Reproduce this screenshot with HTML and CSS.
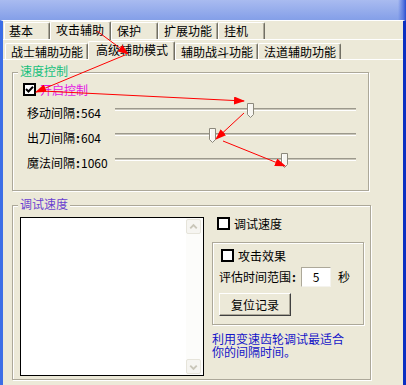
FILE: index.html
```html
<!DOCTYPE html>
<html lang="zh-CN">
<head>
<meta charset="utf-8">
<title>高级辅助模式</title>
<link rel="stylesheet" href="styles.css">
</head>
<body>
<div class="window">
  <div class="titlebar"></div>
  <div class="frame">
    <div class="tabrow outer">
      <div class="tab first">基本</div>
      <div class="tab sel">攻击辅助</div>
      <div class="tab">保护</div>
      <div class="tab">扩展功能</div>
      <div class="tab">挂机</div>
    </div>
    <div class="panel">
      <div class="tabrow inner">
        <div class="tab">战士辅助功能</div>
        <div class="tab sel">高级辅助模式</div>
        <div class="tab">辅助战斗功能</div>
        <div class="tab">法道辅助功能</div>
      </div>
      <div class="panel content">
        <fieldset class="group speed">
          <legend class="legend green">速度控制</legend>
          <label class="check enable">
            <span class="cb"><svg width="9" height="9" viewBox="0 0 9 9"><polyline points="1,4 3.5,6.5 8,1.8" fill="none" stroke="#000" stroke-width="2"/></svg></span>
            <span class="magenta">开启控制</span>
          </label>
          <div class="slider-row">
            <span class="slabel">移动间隔<span class="colon">:</span>564</span>
            <div class="track"><span class="thumb" style="left:132px"><svg width="8" height="15" viewBox="0 0 8 15"><path d="M0.5,0.5 H6.5 V11.5 L3.5,14.5 L0.5,11.5 Z" fill="#f7f6f1" stroke="#8c897c"/><path d="M1.5,1.5 V11" stroke="#fff"/></svg></span></div>
          </div>
          <div class="slider-row">
            <span class="slabel">出刀间隔<span class="colon">:</span>604</span>
            <div class="track"><span class="thumb" style="left:94px"><svg width="8" height="15" viewBox="0 0 8 15"><path d="M0.5,0.5 H6.5 V11.5 L3.5,14.5 L0.5,11.5 Z" fill="#f7f6f1" stroke="#8c897c"/><path d="M1.5,1.5 V11" stroke="#fff"/></svg></span></div>
          </div>
          <div class="slider-row">
            <span class="slabel">魔法间隔<span class="colon">:</span>1060</span>
            <div class="track"><span class="thumb" style="left:166px"><svg width="8" height="15" viewBox="0 0 8 15"><path d="M0.5,0.5 H6.5 V11.5 L3.5,14.5 L0.5,11.5 Z" fill="#f7f6f1" stroke="#8c897c"/><path d="M1.5,1.5 V11" stroke="#fff"/></svg></span></div>
          </div>
        </fieldset>
        <fieldset class="group debug">
          <legend class="legend purple">调试速度</legend>
          <div class="debug-body">
            <div class="log">
              <div class="log-text"></div>
              <div class="scrollbar">
                <span class="sbtn"><svg width="14" height="14" viewBox="0 0 14 14"><polyline points="3.5,8.5 7,5 10.5,8.5" fill="none" stroke="#c9c6b9" stroke-width="2"/></svg></span>
                <span class="strack"></span>
                <span class="sbtn"><svg width="14" height="14" viewBox="0 0 14 14"><polyline points="3.5,5.5 7,9 10.5,5.5" fill="none" stroke="#c9c6b9" stroke-width="2"/></svg></span>
              </div>
            </div>
            <div class="side">
              <label class="check top"><span class="cb"></span><span>调试速度</span></label>
              <div class="box">
                <label class="check inbox"><span class="cb"></span><span>攻击效果</span></label>
                <div class="eval">
                  <span>评估时间范围<span class="colon">:</span></span>
                  <span class="input">5</span>
                  <span class="sec">秒</span>
                </div>
                <button class="btn" type="button">复位记录</button>
              </div>
              <div class="hint">
                <div class="hint-line">利用变速齿轮调试最适合</div>
                <div class="hint-line">你的间隔时间。</div>
              </div>
            </div>
          </div>
        </fieldset>
      </div>
    </div>
  </div>
</div>
<svg class="arrows" width="406" height="385" viewBox="0 0 406 385">
  <defs>
    <marker id="ah" markerWidth="11" markerHeight="8" refX="10" refY="4" orient="auto" markerUnits="userSpaceOnUse">
      <path d="M0,0 L11,4 L0,8 Z" fill="#f00"/>
    </marker>
  </defs>
  <g stroke="#f00" stroke-width="1" fill="none">
    <line x1="97" y1="31" x2="128" y2="54" marker-end="url(#ah)"/>
    <line x1="125" y1="55" x2="36" y2="92" marker-end="url(#ah)"/>
    <line x1="42" y1="91" x2="244" y2="101" marker-end="url(#ah)"/>
    <line x1="244" y1="113" x2="216" y2="139" marker-end="url(#ah)"/>
    <line x1="223" y1="141" x2="285" y2="166" marker-end="url(#ah)"/>
  </g>
</svg>
</body>
</html>
```

FILE: styles.css
```css
html, body {
  margin: 0;
  padding: 0;
}
body {
  width: 406px;
  height: 385px;
  overflow: hidden;
  position: relative;
  background: #ece9d8;
  color: #000;
  font-family: "Noto Sans CJK SC", "Noto Sans CJK JP", sans-serif;
  font-size: 12px;
  line-height: 14px;
}
.window {
  display: flex;
  flex-direction: column;
  height: 385px;
}
.titlebar {
  flex: none;
  height: 20px;
  background:
    linear-gradient(to right, rgba(0,0,0,0) 398px, #5d7ce0 403px, #2a4fcf 406px),
    linear-gradient(to bottom, #a9bbf0, #849fe8);
}
.frame {
  flex: 1;
  display: flex;
  flex-direction: column;
  border-top: 1px solid #fff;
  border-left: 3px solid #3c6ee6;
  border-right: 3px solid #0a2fc2;
}

/* tabs */
.tabrow {
  flex: none;
  display: flex;
  align-items: flex-end;
}
.tabrow.outer {
  height: 18px;
  padding-left: 1px;
}
.tabrow.inner {
  height: 19px;
  padding-left: 2px;
}
.tab {
  box-sizing: border-box;
  white-space: nowrap;
  min-width: 47px;
  border-top: 1px solid #fff;
  border-left: 1px solid #fff;
  border-right: 1px solid #716f64;
  box-shadow: inset -1px 0 0 #aca899;
  border-radius: 2px 2px 0 0;
  background: #ece9d8;
}
.outer .tab {
  height: 17px;
  line-height: 16px;
  padding: 0 5px;
}
.outer .tab.first {
  min-width: 46px;
  padding-left: 4px;
}
.inner .tab {
  height: 16px;
  line-height: 15px;
  padding: 0 4px 0 5px;
}
.tab.sel {
  position: relative;
  z-index: 1;
  height: 19px;
  margin-bottom: -1px;
  line-height: 15px;
}
.outer .tab.sel {
  padding: 0 6px 3px 5px;
}
.inner .tab.sel {
  padding: 0 6px 3px 7px;
}
.panel {
  flex: 1;
  display: flex;
  flex-direction: column;
  border-top: 1px solid #fff;
}
.panel.content {
  padding: 4px 0 0 9px;
}

/* group boxes */
.group {
  margin: 0;
  padding: 0;
  min-width: 0;
  border: 1px solid #aca899;
  box-shadow: 1px 1px 0 #fff, inset 1px 1px 0 #fff;
}
.legend {
  margin-left: 5px;
  padding: 0 2px 4px;
  line-height: 13px;
  background: #ece9d8;
}
.green { color: #16c07c; }
.purple { color: #6a3fd0; }
.magenta { color: #e414e4; }

.speed {
  width: 357px;
  box-sizing: border-box;
  padding-bottom: 15px;
}
.debug {
  width: 359px;
  box-sizing: border-box;
  margin-top: 6px;
  padding-bottom: 3px;
}

/* checkboxes */
.check {
  display: flex;
  align-items: flex-start;
}
.cb {
  flex: none;
  box-sizing: border-box;
  width: 13px;
  height: 13px;
  border: 2px solid #000;
  background: #fff;
  margin-right: 4px;
  display: flex;
}
.check.enable {
  height: 14px;
  line-height: 14px;
  margin: 2px 0 0 10px;
}

/* sliders */
.slider-row {
  display: flex;
  align-items: flex-start;
  height: 25px;
  line-height: 25px;
  padding-left: 14px;
}
.check.enable + .slider-row {
  margin-top: 3px;
}
.slabel {
  flex: none;
  width: 88px;
  white-space: nowrap;
}
.colon {
  display: inline-block;
  width: 6px;
  text-align: center;
  font-weight: bold;
}
.track {
  flex: none;
  position: relative;
  width: 241px;
  height: 3px;
  margin-top: 8px;
  box-sizing: border-box;
  border-top: 1px solid #9c998c;
  border-bottom: 1px solid #fff;
  background: #c9c6ba;
}
.thumb {
  position: absolute;
  top: -6px;
  width: 8px;
  height: 15px;
  display: block;
  line-height: 0;
}

/* debug area */
.debug-body {
  display: flex;
  align-items: flex-start;
  padding-left: 7px;
}
.log {
  flex: none;
  box-sizing: border-box;
  width: 184px;
  height: 159px;
  margin-top: 3px;
  border: 1px solid #000;
  background: #fff;
  display: flex;
}
.log-text {
  flex: 1;
}
.scrollbar {
  flex: none;
  width: 16px;
  display: flex;
  flex-direction: column;
  background: #fcfcfa;
  padding: 1px 1px 1px 0;
}
.sbtn {
  flex: none;
  box-sizing: border-box;
  width: 15px;
  height: 15px;
  border: 1px solid #e6e4da;
  border-radius: 2px;
  background: #f6f5f1;
  display: flex;
  align-items: center;
  justify-content: center;
}
.strack {
  flex: 1;
}
.side {
  flex: none;
  width: 152px;
  margin-left: 8px;
  display: flex;
  flex-direction: column;
}
.check.top {
  height: 13px;
  line-height: 13px;
  margin-top: 3px;
  padding-left: 5px;
}
.box {
  box-sizing: border-box;
  width: 152px;
  margin-top: 12px;
  padding: 6px 0 8px 6px;
  border: 1px solid #aca899;
  box-shadow: 1px 1px 0 #fff, inset 1px 1px 0 #fff;
  display: flex;
  flex-direction: column;
  align-items: flex-start;
}
.check.inbox {
  height: 13px;
  line-height: 13px;
  margin-left: 2px;
}
.eval {
  display: flex;
  align-items: center;
  height: 20px;
  line-height: 20px;
  margin-top: 5px;
  white-space: nowrap;
}
.input {
  box-sizing: border-box;
  width: 30px;
  height: 20px;
  line-height: 18px;
  margin-left: 4px;
  text-align: center;
  background: #fff;
  border: 1px solid;
  border-color: #aca899 #f4f3ee #f4f3ee #aca899;
}
.sec {
  margin-left: 7px;
}
.btn {
  box-sizing: border-box;
  width: 72px;
  height: 23px;
  margin-top: 6px;
  padding: 0;
  font: inherit;
  line-height: 20px;
  color: #000;
  background: #ece9d8;
  border: 1px solid;
  border-color: #fff #404040 #404040 #fff;
  box-shadow: inset -1px -1px 0 #aca899;
  border-radius: 0;
}
.hint {
  margin-top: 7px;
  color: #1414c8;
  white-space: nowrap;
}
.hint-line {
  height: 13px;
  line-height: 13px;
}

/* annotation arrows */
.arrows {
  position: absolute;
  left: 0;
  top: 0;
  z-index: 10;
  pointer-events: none;
}
```
